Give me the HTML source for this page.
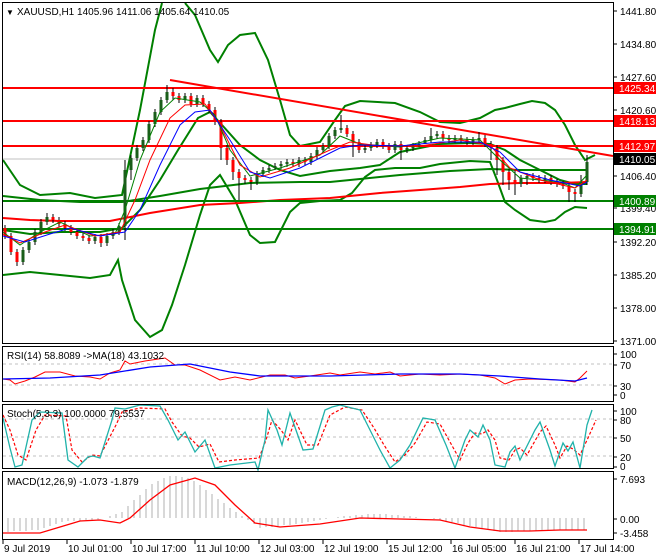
<!DOCTYPE html>
<html><head><meta charset="utf-8"><style>
html,body{margin:0;padding:0;background:#fff;}
svg{display:block;font-family:"Liberation Sans",sans-serif;}
</style></head><body>
<svg width="660" height="560" viewBox="0 0 660 560" xmlns="http://www.w3.org/2000/svg">
<rect width="660" height="560" fill="#fff"/>
<g fill="none">
<line x1="3" y1="159" x2="613" y2="159" stroke="#c0c0c0"/>
<polyline stroke="#008000" stroke-width="2" points="3,160 20,185 40,195 70,193 95,198 122,195 140,110 155,30 162,3"/>
<polyline stroke="#008000" stroke-width="2" points="185,3 195,15 210,50 218,62 228,45 240,35 255,33 268,60 280,100 290,135 300,146 320,142 335,120 345,106 360,101 395,103 420,112 440,122 460,123 480,118 495,110 505,108 520,104 532,101 545,103 555,110 565,125 575,145 585,160 595,155"/>
<polyline stroke="#008000" stroke-width="2" points="3,275 30,272 60,275 90,278 110,275 118,260 122,280 135,320 150,337 162,330 172,305 185,265 200,215 210,185 220,175 235,200 250,235 260,243 275,242 290,212 300,203 320,201 340,200 352,193 365,177 375,170 395,168 420,168 440,164 470,161 490,162 497,180 505,202 515,210 530,220 545,222 555,220 565,212 575,207 587,208"/>
<polyline stroke="#008000" stroke-width="2" points="3,230 30,234 60,232 100,232 122,228 140,210 160,180 178,150 198,118 210,112 222,125 240,145 260,160 280,170 300,176 330,171 360,168 380,165 400,152 420,148 440,144 470,143 490,144 505,150 520,160 540,170 560,180 575,184 587,184"/>
<polyline stroke="#008000" stroke-width="2" points="3,196 40,200 80,202 122,202 160,196 200,189 250,183 300,182 330,182 360,179 400,175 450,171 490,169 520,170 587,170"/>
<polyline stroke="#ff0000" stroke-width="2" points="3,218 30,220 60,221 110,221 125,218 150,213 200,205 240,203 280,200 330,198 380,193 420,190 460,187 490,184 520,183 560,183 587,182"/>
<line x1="3" y1="201" x2="613" y2="201" stroke="#008000" stroke-width="2"/>
<line x1="3" y1="229" x2="613" y2="229" stroke="#008000" stroke-width="2"/>
<line x1="3" y1="88" x2="613" y2="88" stroke="#ff0000" stroke-width="2"/>
<line x1="3" y1="121" x2="613" y2="121" stroke="#ff0000" stroke-width="2"/>
<line x1="3" y1="146" x2="613" y2="146" stroke="#ff0000" stroke-width="2"/>
<line x1="170" y1="80" x2="613" y2="156" stroke="#ff0000" stroke-width="2"/>
<!-- wicks -->
<path stroke="#000" stroke-width="1" d="M5,225V239M11,233V255M17,249V266M23,247V265M29,239V253M35,229V245M41,219V235M47,213V225M53,214V223M59,217V227M65,221V231M71,225V235M77,229V239M83,233V241M89,235V244M95,234V244M101,234V247M107,233V246M113,229V239M119,223V235M125,160V240M131,155V180M137,145V161M143,137V151M149,121V143M155,109V127M161,97V115M167,85V103M173,88V100M179,93V103M185,93V103M191,93V107M197,95V107M203,95V107M209,101V113M215,107V125M221,119V160M227,145V165M233,157V180M239,169V200M245,175V184M251,177V190M257,171V185M263,167V177M269,165V173M275,163V170M281,161V169M287,159V167M293,159V167M299,157V167M305,157V165M311,153V165M317,147V159M323,143V153M329,133V149M335,127V139M341,115V133M347,125V137M353,131V157M359,139V153M365,145V153M371,142V151M377,139V148M383,139V149M389,143V153M395,141V153M401,141V160M407,145V153M413,143V151M419,141V147M425,137V143M431,128V143M437,131V139M443,131V141M449,135V143M455,135V143M461,135V143M467,137V145M473,137V145M479,132V143M485,135V147M491,141V160M497,145V175M503,157V185M509,169V190M515,170V195M521,175V187M527,173V185M533,173V181M539,175V183M545,175V183M551,175V185M557,179V187M563,181V189M569,183V202M575,189V202M581,175V197M587,155V185"/>
<!-- bear bodies -->
<path stroke="#ff0000" stroke-width="3" d="M5,228V236M11,236V252M17,252V262M53,217V220M59,220V224M65,224V228M71,228V232M77,232V236M83,236V238M89,238V241M101,237V243M173,92V96M179,96V100M191,96V104M203,98V104M209,104V110M215,110V122M221,122V148M227,148V160M233,160V172M239,172V178M245,178V180M251,180V182M293,162V164M305,160V162M347,128V134M353,134V142M359,142V150M383,142V146M389,146V150M401,144V150M443,134V138M449,138V140M461,138V140M467,140V142M485,138V144M491,144V148M497,148V160M503,160V172M509,172V180M515,180V184M533,176V178M539,178V180M551,178V182M557,182V184M563,184V186M569,186V192M575,192V194"/>
<!-- bull bodies -->
<path stroke="#1a5e1a" stroke-width="3" d="M23,250V262M29,242V250M35,232V242M41,222V232M47,217V222M95,237V241M107,236V243M113,232V236M119,226V232M125,170V226M131,158V170M137,148V158M143,140V148M149,124V140M155,112V124M161,100V112M167,92V100M185,96V100M197,98V104M257,174V182M263,170V174M269,168V170M275,166V168M281,164V166M287,162V164M299,160V164M311,156V162M317,150V156M323,146V150M329,136V146M335,130V136M341,128V130M365,148V150M371,145V148M377,142V145M395,144V150M407,148V150M413,146V148M419,144V146M425,140V144M431,136V140M437,134V136M455,138V140M473,140V142M479,138V140M521,178V184M527,176V178M545,178V180M581,182V194M587,162V182"/>
<polyline stroke="#008000" stroke-width="1" points="3,232 20,245 40,232 60,222 90,236 115,234 125,210 140,160 160,112 175,98 200,102 215,115 230,150 250,176 280,168 320,155 340,136 360,144 400,147 440,138 480,140 500,160 520,178 560,182 575,188 587,175"/>
<polyline stroke="#ff0000" stroke-width="1" points="3,234 20,243 45,232 65,225 95,236 120,232 135,200 150,160 170,118 185,105 205,104 220,125 240,165 260,177 290,168 330,150 350,142 380,146 420,146 460,140 490,145 510,168 540,180 575,188 587,180"/>
<polyline stroke="#0000ff" stroke-width="1" points="3,236 25,242 50,234 70,228 100,236 125,232 140,210 160,165 180,125 195,112 210,110 230,140 250,172 270,178 300,168 340,148 360,145 400,146 440,142 480,142 500,152 520,172 550,180 580,186 587,182"/>
<!-- RSI -->
<line x1="3" y1="364" x2="613" y2="364" stroke="#c0c0c0" stroke-dasharray="3,3"/>
<line x1="3" y1="385" x2="613" y2="385" stroke="#c0c0c0" stroke-dasharray="3,3"/>
<polyline stroke="#ff0000" stroke-width="1" points="3,379 10,380 15,384 25,381 35,377 45,372 60,372 75,376 90,377 100,379 110,373 120,370 125,361 130,364 145,361 165,358 175,365 185,365 200,370 220,380 235,377 250,380 270,375 285,375 295,378 310,376 330,373 340,375 360,372 375,374 390,372 400,376 420,374 440,375 460,374 480,375 495,378 505,384 515,380 530,379 560,380 575,382 580,378 587,371"/>
<polyline stroke="#0000ff" stroke-width="1.3" points="3,379 50,378 100,375 150,367 190,364 230,372 260,376 330,376 400,374 460,374 500,376 540,379 575,381 587,378"/>
<!-- Stoch -->
<line x1="3" y1="419" x2="613" y2="419" stroke="#c0c0c0" stroke-dasharray="3,3"/>
<line x1="3" y1="437" x2="613" y2="437" stroke="#c0c0c0" stroke-dasharray="3,3"/>
<line x1="3" y1="456" x2="613" y2="456" stroke="#c0c0c0" stroke-dasharray="3,3"/>
<polyline stroke="#ff0000" stroke-width="1.2" stroke-dasharray="3,2" points="3,415 10,430 18,455 26,460 36,430 45,415 66,416 72,450 82,462 92,455 100,456 116,425 122,412 140,408 165,409 172,422 182,436 190,438 199,447 210,444 219,462 235,460 259,458 266,440 272,420 281,430 288,440 295,420 307,445 318,445 330,415 345,407 362,410 374,428 384,445 395,462 405,455 415,443 427,422 440,424 450,442 460,460 468,443 475,433 482,434 488,430 495,440 500,458 509,460 515,450 520,448 527,455 540,432 546,426 555,445 560,458 567,446 573,449 580,455 588,438 596,420"/>
<polyline stroke="#20b2aa" stroke-width="1.3" points="3,418 10,448 15,467 22,465 32,420 40,412 62,413 68,460 78,467 88,457 93,456 100,458 112,420 115,408 125,409 140,405 160,406 168,420 178,440 185,432 195,452 205,440 215,468 230,465 255,462 258,470 265,440 268,410 277,430 282,445 290,413 303,450 313,449 325,410 332,407 340,405 360,410 370,430 380,450 390,468 400,460 410,445 423,418 435,420 446,445 455,468 465,440 470,430 478,437 483,425 490,440 495,465 505,467 510,452 515,446 520,460 535,430 540,422 550,450 555,466 563,443 568,451 573,442 580,468 587,425 592,410"/>
<!-- MACD -->
<path stroke="#b0b0b0" stroke-width="1" d="M8,518V532M14,518V531M20,518V531M26,518V531M32,518V530M38,518V530M44,518V528M50,518V526M56,518V524M62,518V522M68,518V521M74,518V521M80,518V521M86,518V520M92,518V520M98,518V520M110,518V516M116,518V514M122,518V512M128,518V506M134,518V500M140,518V495M146,518V489M152,518V484M158,518V481M164,518V478M170,518V476M176,518V476M182,518V477M188,518V478M194,518V481M200,518V485M206,518V490M212,518V494M218,518V499M224,518V503M230,518V508M236,518V512M242,518V516M248,518V520M254,518V524M260,518V528M266,518V527M272,518V527M278,518V526M284,518V525M290,518V525M296,518V524M302,518V523M308,518V522M314,518V521M320,518V520M326,518V519M338,518V517M344,518V516M350,518V516M356,518V515M362,518V515M368,518V514M374,518V514M380,518V514M386,518V514M392,518V515M398,518V515M404,518V516M410,518V516M416,518V517M434,518V519M440,518V520M446,518V521M452,518V522M458,518V523M464,518V525M470,518V526M476,518V527M482,518V528M488,518V530M494,518V531M500,518V532M506,518V532M512,518V532M518,518V531M524,518V531M530,518V531M536,518V531M542,518V530M548,518V530M554,518V530M560,518V530M566,518V530M572,518V530M578,518V530M584,518V530"/>
<polyline stroke="#ff0000" stroke-width="1.3" points="3,533 40,533 60,527 80,521 100,520 120,523 130,518 150,500 170,485 195,478 215,485 235,505 255,523 280,527 320,524 360,518 400,519 440,520 470,527 500,531 530,531 560,530 587,530"/>
</g>
<g fill="none" stroke="#000" stroke-width="1">
<rect x="2.5" y="2.5" width="611" height="341"/>
<rect x="2.5" y="346.5" width="611" height="55"/>
<rect x="2.5" y="404.5" width="611" height="64"/>
<rect x="2.5" y="471.5" width="611" height="68"/>
<path d="M613,11h4M613,44h4M613,77h4M613,110h4M613,176h4M613,208h4M613,242h4M613,275h4M613,308h4M613,341h4M613,354h4M613,365h4M613,386h4M613,395h4M613,411h4M613,420h4M613,438h4M613,457h4M613,467h4M613,479h4M613,519h4M613,533h4M3,540v4M67,540v4M131,540v4M195,540v4M259,540v4M323,540v4M387,540v4M451,540v4M515,540v4M579,540v4"/>
</g>
<g font-size="10" fill="#000">
<text x="6" y="15" font-size="8">▼</text>
<text x="17" y="15">XAUUSD,H1  1405.96 1411.06 1405.64 1410.05</text>
<text x="7" y="359">RSI(14) 58.8089  -&gt;MA(18) 43.1032</text>
<text x="7" y="417">Stoch(5,3,3) 100.0000 79.5537</text>
<text x="7" y="485">MACD(12,26,9) -1.073 -1.879</text>
<text x="620" y="15">1441.80</text>
<text x="620" y="48">1434.80</text>
<text x="620" y="81">1427.60</text>
<text x="620" y="114">1420.60</text>
<text x="620" y="180">1406.40</text>
<text x="620" y="212">1399.40</text>
<text x="620" y="246">1392.20</text>
<text x="620" y="279">1385.20</text>
<text x="620" y="312">1378.00</text>
<text x="620" y="345">1371.00</text>
<rect x="614" y="82" width="42" height="12" fill="#ff0000"/><text x="619" y="92" fill="#fff">1425.34</text>
<rect x="614" y="115" width="42" height="12" fill="#ff0000"/><text x="619" y="125" fill="#fff">1418.13</text>
<rect x="614" y="140" width="42" height="12" fill="#ff0000"/><text x="619" y="150" fill="#fff">1412.97</text>
<rect x="614" y="153" width="42" height="12" fill="#000"/><text x="619" y="163" fill="#fff">1410.05</text>
<rect x="614" y="195" width="42" height="12" fill="#008000"/><text x="619" y="205" fill="#fff">1400.89</text>
<rect x="614" y="223" width="42" height="12" fill="#008000"/><text x="619" y="233" fill="#fff">1394.91</text>
<text x="620" y="358">100</text><text x="620" y="369">70</text><text x="620" y="390">30</text><text x="620" y="399">0</text>
<text x="620" y="415">100</text><text x="620" y="424">80</text><text x="620" y="442">50</text><text x="620" y="461">20</text><text x="620" y="470">0</text>
<text x="620" y="483">7.693</text><text x="620" y="523">0.00</text><text x="620" y="537">-3.458</text>
<text x="4" y="552">9 Jul 2019</text>
<text x="68" y="552">10 Jul 01:00</text>
<text x="132" y="552">10 Jul 17:00</text>
<text x="196" y="552">11 Jul 10:00</text>
<text x="260" y="552">12 Jul 03:00</text>
<text x="324" y="552">12 Jul 19:00</text>
<text x="388" y="552">15 Jul 12:00</text>
<text x="452" y="552">16 Jul 05:00</text>
<text x="516" y="552">16 Jul 21:00</text>
<text x="580" y="552">17 Jul 14:00</text>
</g>
</svg>
</body></html>
